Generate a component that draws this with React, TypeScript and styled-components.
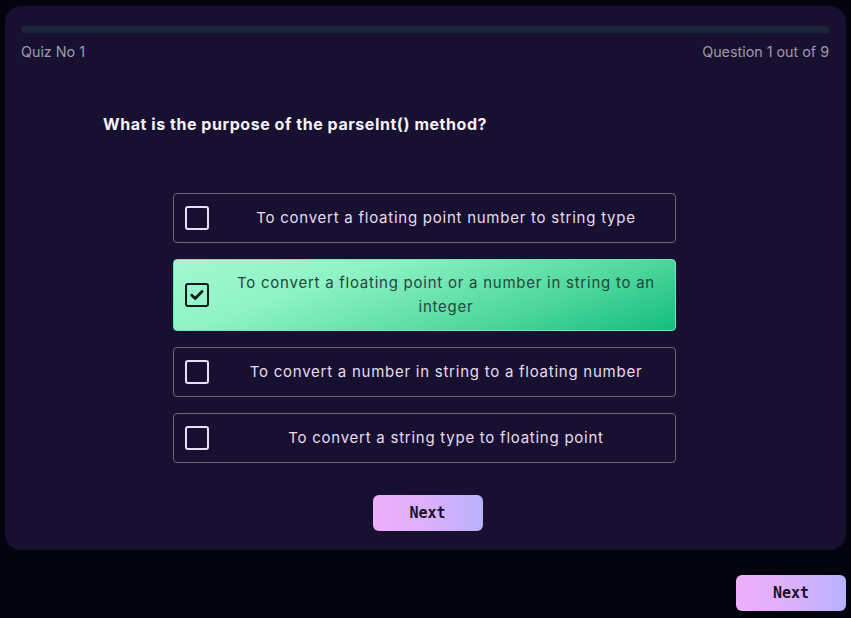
import React, { useState } from "react";
import styled, { createGlobalStyle } from "styled-components";

const Global = createGlobalStyle`
  html, body { margin: 0; padding: 0; background: #04040f; }
  body { font-family: "Inter", "Noto Sans", sans-serif; }
  * { box-sizing: border-box; }
`;

const Page = styled.div`
  width: 851px;
  height: 618px;
  padding: 6px 5px 0 5px;
  display: flex;
  flex-direction: column;
  align-items: stretch;
`;

const Card = styled.div`
  height: 544px;
  background: #181030;
  border-radius: 16px;
  padding: 20px 17px 0 16px;
  display: flex;
  flex-direction: column;
`;

const Progress = styled.div`
  height: 7px;
  border-radius: 4px;
  background: #1b2535;
`;

const Meta = styled.div`
  display: flex;
  justify-content: space-between;
  margin-top: 10px;
  font-family: "Inter", sans-serif;
  font-size: 14.3px;
  color: #a09aaa;
  letter-spacing: 0px;
  line-height: 18px;
`;

const Question = styled.h2`
  margin: 53px 0 0 82px;
  font-family: "Inter", sans-serif;
  font-weight: 700;
  font-size: 16px;
  letter-spacing: 0.55px;
  color: #f4f2f8;
  line-height: 20px;
`;

const Options = styled.div`
  margin: 59px 0 0 152px;
  width: 503px;
  display: flex;
  flex-direction: column;
  gap: 16px;
`;

const Option = styled.button<{ $selected?: boolean }>`
  display: flex;
  align-items: center;
  min-height: 50px;
  padding: 11px 4px 11px 11px;
  border-radius: 4px;
  border: 1px solid ${(p) => (p.$selected ? "#6ee7b7" : "#6c6480")};
  background: ${(p) =>
    p.$selected
      ? "linear-gradient(160deg, #a4f8d2 0%, #8ef3c6 30%, #4fd79d 70%, #14bd7f 100%)"
      : "transparent"};
  color: ${(p) => (p.$selected ? "#25463a" : "#e6dcf2")};
  font-family: "Inter", sans-serif;
  font-size: 15px;
  letter-spacing: 0.75px;
  line-height: 24px;
  text-align: center;
  cursor: pointer;
  width: 100%;
`;

const Box = styled.span<{ $checked?: boolean }>`
  flex: none;
  width: 24px;
  height: 24px;
  border-radius: 3px;
  border: 2.5px solid ${(p) => (p.$checked ? "#0f1a1a" : "#ebdff7")};
  display: flex;
  align-items: center;
  justify-content: center;
  background: transparent;
`;

const Label = styled.span`
  flex: 1;
  padding: 0 2px 0 14px;
`;

const NextButton = styled.button`
  width: 110px;
  height: 36px;
  border: none;
  border-radius: 6px;
  background: linear-gradient(90deg, #eeaefa 0%, #dcb0fb 50%, #b8b1fd 100%);
  color: #1a1228;
  font-family: "DejaVu Sans Mono", monospace;
  font-weight: 700;
  font-size: 15px;
  cursor: pointer;
`;

const CenterRow = styled.div`
  display: flex;
  justify-content: center;
  margin-top: 32px;
  padding-left: 5px;
`;

const Footer = styled.div`
  display: flex;
  justify-content: flex-end;
  margin-top: 25px;
`;

const options = [
  "To convert a floating point number to string type",
  "To convert a floating point or a number in string to an integer",
  "To convert a number in string to a floating number",
  "To convert a string type to floating point",
];

export default function App() {
  const [sel, setSel] = useState(1);
  return (
    <Page>
      <Global />
      <Card>
        <Progress />
        <Meta>
          <span>Quiz No 1</span>
          <span>Question 1 out of 9</span>
        </Meta>
        <Question>What is the purpose of the parseInt() method?</Question>
        <Options>
          {options.map((o, i) => (
            <Option key={i} $selected={sel === i} onClick={() => setSel(i)}>
              <Box $checked={sel === i}>
                {sel === i && (
                  <svg width="16" height="16" viewBox="0 0 16 16">
                    <path d="M2.8 8.2 L6.2 11.4 L13 4.4" stroke="#0f1a1a" strokeWidth="2.8" fill="none" strokeLinecap="round" strokeLinejoin="round" />
                  </svg>
                )}
              </Box>
              <Label>{o}</Label>
            </Option>
          ))}
        </Options>
        <CenterRow>
          <NextButton>Next</NextButton>
        </CenterRow>
      </Card>
      <Footer>
        <NextButton>Next</NextButton>
      </Footer>
    </Page>
  );
}
